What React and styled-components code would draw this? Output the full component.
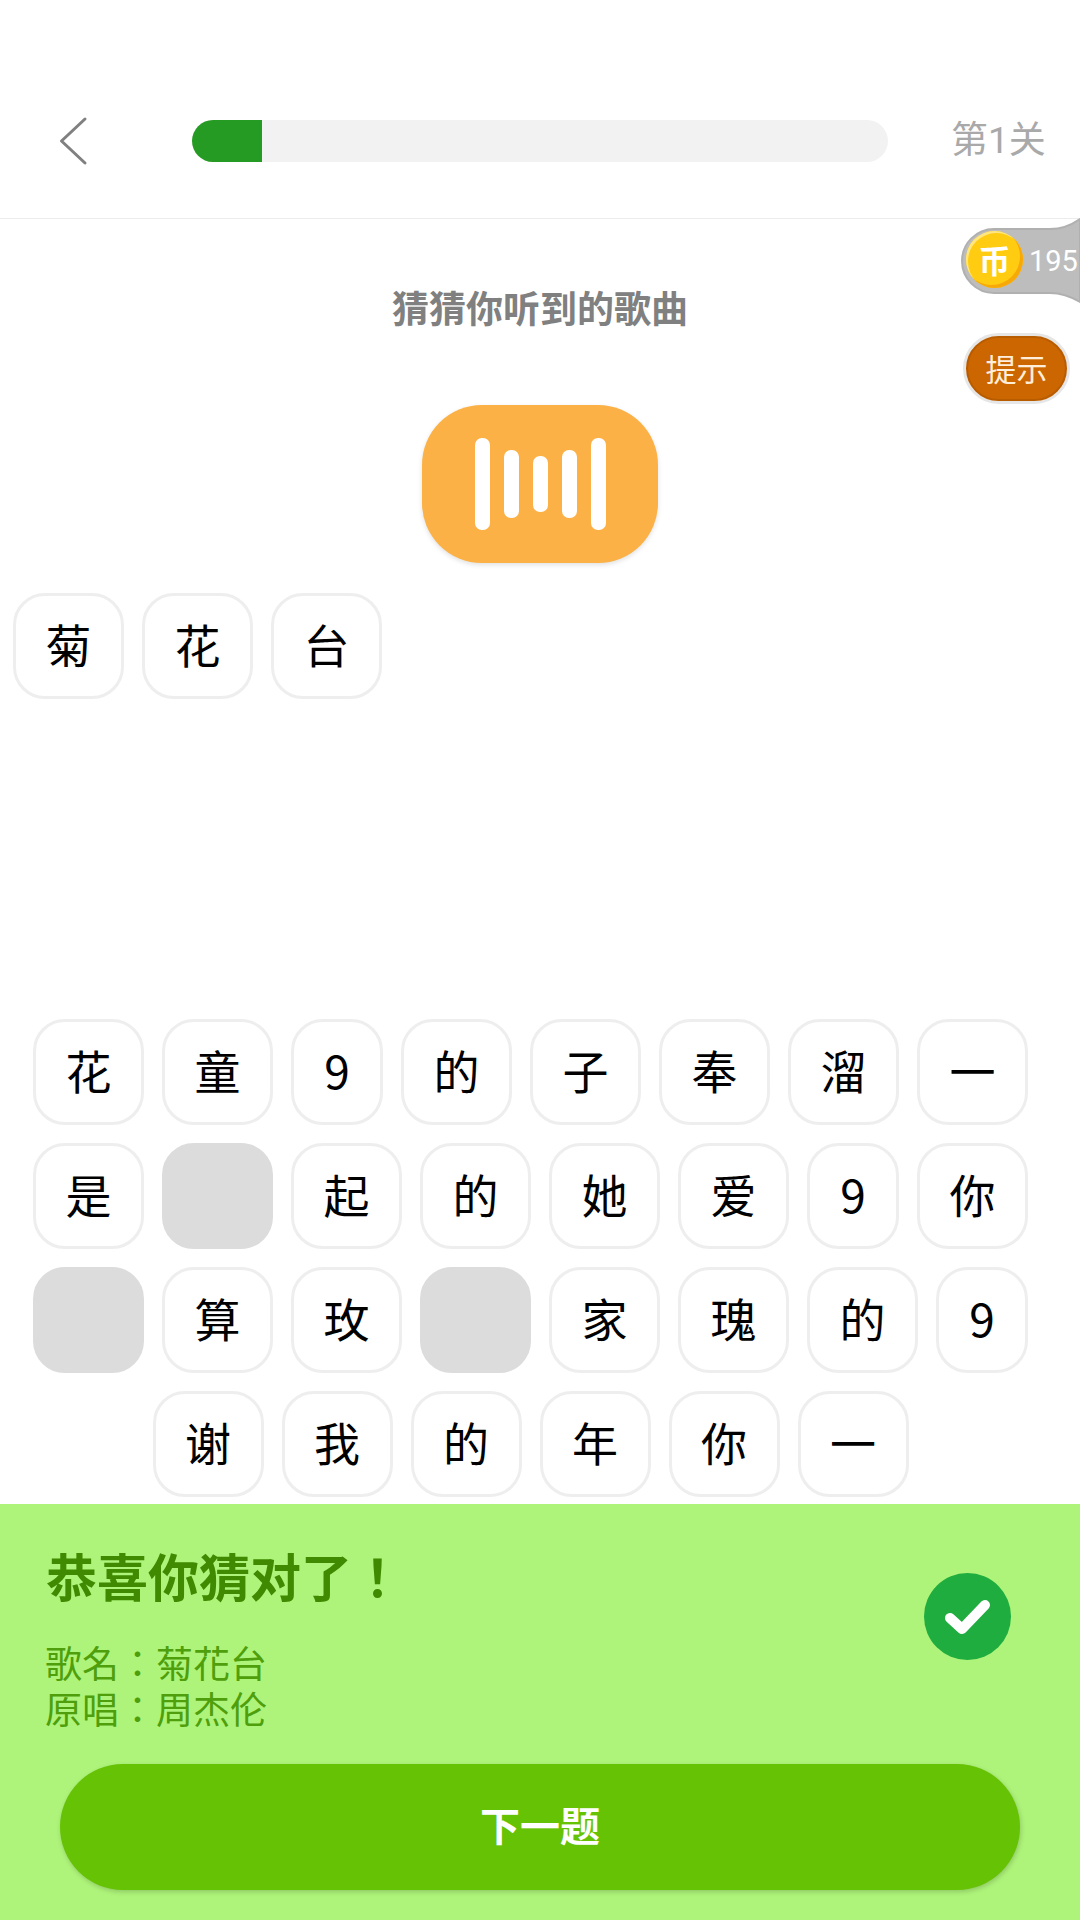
import React from "react";
import styled, { createGlobalStyle } from "styled-components";

const Global = createGlobalStyle`
  html, body { margin: 0; padding: 0; background: #fff; }
  * { box-sizing: border-box; }
`;

const Page = styled.div`
  position: relative;
  width: 1080px;
  height: 1920px;
  overflow: hidden;
  display: flex;
  flex-direction: column;
  background: #fff;
  font-family: Roboto, "Noto Sans CJK SC", sans-serif;
`;

const Header = styled.header`
  display: flex;
  align-items: center;
  height: 219px;
  padding-top: 63px;
  border-bottom: 1px solid #ececec;
`;

const Back = styled.div`
  width: 192px;
  padding-left: 58px;
  display: flex;
  align-items: center;
`;

const Track = styled.div`
  width: 696px;
  height: 42px;
  border-radius: 21px;
  background: #f2f2f2;
  overflow: hidden;
`;

const Fill = styled.div`
  height: 100%;
  background: #269b24;
`;

const Level = styled.div`
  margin-left: 63px;
  font-size: 37px;
  line-height: 42px;
  color: #a9a9a9;
  white-space: nowrap;
`;

const Main = styled.main`
  flex: 1;
  display: flex;
  flex-direction: column;
  align-items: center;
  min-height: 0;
`;

const Title = styled.h1`
  margin: 67px 0 0;
  font-size: 37px;
  line-height: 50px;
  font-weight: 700;
  color: #808080;
`;

const Audio = styled.div`
  margin-top: 69px;
  width: 236px;
  height: 158px;
  border-radius: 60px;
  background: #fbb146;
  box-shadow: 0 2px 5px rgba(0, 0, 0, 0.12);
  display: flex;
  align-items: center;
  justify-content: center;
  gap: 14px;
`;

const Bar = styled.span`
  width: 15px;
  height: ${(p) => p.$h}px;
  border-radius: 7px;
  background: #fff;
`;

const Answer = styled.div`
  align-self: stretch;
  margin-top: 30px;
  padding-left: 13px;
  display: flex;
`;

const Tile = styled.div`
  flex: none;
  width: ${(p) => (p.$narrow ? 92 : 111)}px;
  height: 106px;
  margin-right: 18px;
  padding-bottom: 6px;
  border-radius: 32px;
  border: 3px solid ${(p) => (p.$empty ? "#dcdcdc" : "#eeeeee")};
  background: ${(p) => (p.$empty ? "#dcdcdc" : "#fff")};
  color: #000;
  font-family: "Noto Sans CJK SC", sans-serif;
  font-size: 46px;
  display: flex;
  align-items: center;
  justify-content: center;
`;

const Keyboard = styled.div`
  margin-top: auto;
  padding-bottom: 7px;
  align-self: stretch;
  display: flex;
  flex-direction: column;
  gap: 18px;
`;

const KeyRow = styled.div`
  display: flex;
  justify-content: center;
  padding-right: 1px;
`;

const Panel = styled.section`
  position: relative;
  flex: none;
  height: 416px;
  padding: 44px 60px 30px 45px;
  background: #aef47a;
  display: flex;
  flex-direction: column;
  font-family: Roboto, "Noto Sans CJK TC", sans-serif;
`;

const Congrats = styled.h2`
  margin: 0 0 0 1px;
  font-size: 51px;
  line-height: 64px;
  font-weight: 700;
  color: #3f8a00;
`;

const Info = styled.p`
  margin: 0;
  font-size: 37px;
  line-height: 46px;
  color: #4f9f0c;
`;

const InfoBlock = styled.div`
  margin-top: 31px;
`;

const Next = styled.button`
  margin: auto 0 0 15px;
  width: 960px;
  height: 126px;
  padding: 0 0 6px;
  flex: none;
  border: 0;
  border-radius: 63px;
  background: #66c204;
  box-shadow: 1px 2px 5px rgba(0, 0, 0, 0.18);
  color: #fff;
  font: 700 40px "Noto Sans CJK SC", sans-serif;
`;

const Check = styled.div`
  position: absolute;
  top: 69px;
  left: 924px;
  width: 87px;
  height: 87px;
  border-radius: 50%;
  background: #20ad40;
  display: flex;
  align-items: center;
  justify-content: center;
`;

const CoinTab = styled.div`
  position: absolute;
  top: 218px;
  left: 958px;
  width: 122px;
  height: 86px;
`;

const CoinShape = styled.svg`
  position: absolute;
  inset: 0;
`;

const Coin = styled.div`
  position: absolute;
  top: 13px;
  left: 8px;
  width: 57px;
  height: 57px;
  padding-bottom: 2px;
  border-radius: 50%;
  background: #ffcc11;
  box-shadow: inset -3px -3px 0 #f7a90a, inset 2px 2px 0 #ffe680;
  color: #fff;
  font-size: 32px;
  font-weight: 700;
  display: flex;
  align-items: center;
  justify-content: center;
`;

const CoinCount = styled.span`
  position: absolute;
  top: 25px;
  left: 71px;
  font-size: 29px;
  line-height: 36px;
  color: #fff;
  white-space: nowrap;
`;

const Hint = styled.div`
  position: absolute;
  top: 333px;
  left: 963px;
  width: 107px;
  height: 71px;
  padding-bottom: 3px;
  border-radius: 36px;
  border: 3px solid #e6e6e6;
  background: #cc6600;
  box-shadow: inset 0 0 0 2px #b85c00;
  color: #ffeeda;
  font-size: 31px;
  display: flex;
  align-items: center;
  justify-content: center;
`;

const rows = [
  ["花", "童", "9", "的", "子", "奉", "溜", "一"],
  ["是", "", "起", "的", "她", "爱", "9", "你"],
  ["", "算", "玫", "", "家", "瑰", "的", "9"],
  ["谢", "我", "的", "年", "你", "一"],
];

export default function App() {
  return (
    <Page>
      <Global />
      <Header>
        <Back>
          <svg width="30" height="50" viewBox="0 0 30 50" fill="none">
            <path d="M27 3 L3.5 25 L27 47" stroke="#808080" strokeWidth="3" strokeLinecap="round" strokeLinejoin="round" />
          </svg>
        </Back>
        <Track>
          <Fill style={{ width: `${(70 / 696) * 100}%` }} />
        </Track>
        <Level>第1关</Level>
      </Header>
      <Main>
        <Title>猜猜你听到的歌曲</Title>
        <Audio>
          {[92, 68, 56, 68, 92].map((h, i) => (
            <Bar key={i} $h={h} />
          ))}
        </Audio>
        <Answer>
          {["菊", "花", "台"].map((c) => (
            <Tile key={c}>{c}</Tile>
          ))}
        </Answer>
        <Keyboard>
          {rows.map((row, r) => (
            <KeyRow key={r}>
              {row.map((c, i) => (
                <Tile key={i} $empty={c === ""} $narrow={c === "9"}>
                  {c}
                </Tile>
              ))}
            </KeyRow>
          ))}
        </Keyboard>
      </Main>
      <Panel>
        <Congrats>恭喜你猜对了！</Congrats>
        <InfoBlock>
          <Info>歌名：菊花台</Info>
          <Info>原唱：周杰伦</Info>
        </InfoBlock>
        <Next>下一题</Next>
        <Check>
          <svg width="46" height="38" viewBox="0 0 46 38" fill="none">
            <path d="M5 20 L17 31 L40 7" stroke="#fff" strokeWidth="10" strokeLinecap="round" strokeLinejoin="round" />
          </svg>
        </Check>
      </Panel>
      <CoinTab>
        <CoinShape width="122" height="86" viewBox="0 0 122 86">
          <path
            d="M122 1 C112 8 104 11 92 11 L36 11 A32 32 0 0 0 36 75 L92 75 C104 75 112 78 122 84 Z"
            fill="#bdbdbd"
            stroke="#b0b0b0"
            strokeWidth="2"
          />
        </CoinShape>
        <Coin>币</Coin>
        <CoinCount>195</CoinCount>
      </CoinTab>
      <Hint>提示</Hint>
    </Page>
  );
}
